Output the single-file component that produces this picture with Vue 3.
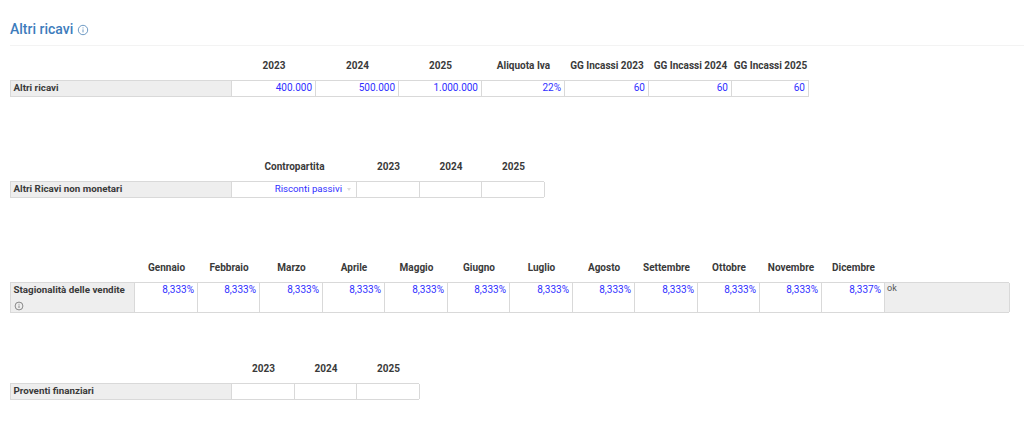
<script setup>
const months = ['Gennaio','Febbraio','Marzo','Aprile','Maggio','Giugno','Luglio','Agosto','Settembre','Ottobre','Novembre','Dicembre']
const monthValues = ['8,333%','8,333%','8,333%','8,333%','8,333%','8,333%','8,333%','8,333%','8,333%','8,333%','8,333%','8,337%']
const firstHead = ['2023','2024','2025','Aliquota Iva','GG Incassi 2023','GG Incassi 2024','GG Incassi 2025']
const firstValues = ['400.000','500.000','1.000.000','22%','60','60','60']
const years = ['2023','2024','2025']
</script>

<template>
  <div class="page">
    <header class="title-bar">
      <h1>Altri ricavi</h1>
      <svg class="info big" viewBox="0 0 12 12"><circle cx="6" cy="6" r="4.7"/><path d="M6 5.4v3M6 3.4v1"/></svg>
    </header>

    <section class="block b1">
      <div class="grid head g1">
        <span></span>
        <span v-for="h in firstHead" :key="h">{{ h }}</span>
      </div>
      <div class="grid row g1">
        <div class="label">Altri ricavi</div>
        <div v-for="(v, i) in firstValues" :key="i" class="cell">{{ v }}</div>
      </div>
    </section>

    <section class="block b2">
      <div class="grid head g2">
        <span></span>
        <span>Contropartita</span>
        <span v-for="y in years" :key="y">{{ y }}</span>
      </div>
      <div class="grid row g2">
        <div class="label">Altri Ricavi non monetari</div>
        <div class="cell select">Risconti passivi<i></i></div>
        <div v-for="y in years" :key="y" class="cell"></div>
      </div>
    </section>

    <section class="block b3">
      <div class="grid head g3">
        <span></span>
        <span v-for="m in months" :key="m">{{ m }}</span>
      </div>
      <div class="grid row tall g3">
        <div class="label">
          <div>Stagionalità delle vendite</div>
          <svg class="info small" viewBox="0 0 12 12"><circle cx="6" cy="6" r="4.7"/><path d="M6 5.4v3M6 3.4v1"/></svg>
        </div>
        <div v-for="(v, i) in monthValues" :key="i" class="cell">{{ v }}</div>
        <div class="status">ok</div>
      </div>
    </section>

    <section class="block b4">
      <div class="grid head g4">
        <span></span>
        <span v-for="y in years" :key="y">{{ y }}</span>
      </div>
      <div class="grid row g4">
        <div class="label">Proventi finanziari</div>
        <div v-for="y in years" :key="y" class="cell"></div>
      </div>
    </section>
  </div>
</template>

<style>
html, body { margin: 0; background: #fff; }
</style>

<style scoped>
.page {
  width: 1024px;
  height: 444px;
  box-sizing: border-box;
  padding: 20px 0 0 10px;
  overflow: hidden;
  font-family: Roboto, "Liberation Sans", sans-serif;
  font-size: 10px;
  color: #3a3a3a;
}
.title-bar {
  display: flex;
  align-items: center;
  gap: 4px;
  height: 25px;
  border-bottom: 1px solid #f3f3f3;
}
h1 {
  margin: 0;
  font-size: 14px;
  font-weight: 500;
  color: #3d7cbc;
  line-height: 18px;
  position: relative;
  top: -4px;
}
.info { fill: none; stroke-width: 0.9; }
.info.big { width: 12px; height: 12px; stroke: #5f8fbd; position: relative; top: -3px; }
.info.small { width: 10px; height: 10px; stroke: #666; display: block; margin-top: 5px; }
.block { display: block; }
.b1 { margin-top: 8px; }
.b2 { margin-top: 58px; }
.b3 { margin-top: 58px; }
.b4 { margin-top: 44px; }
.grid { display: grid; }
.g1 { grid-template-columns: 221px 84px 83px 83px 83px 84px 83px 77px; width: 799px; }
.g2 { grid-template-columns: 221px 125px 63px 62px 63px; width: 534px; }
.g3 { grid-template-columns: 124px 63px 62px 63px 62px 63px 62px 63px 62px 63px 62px 62px 63px 125px; width: 999px; }
.g4 { grid-template-columns: 221px 63px 62px 63px; width: 409px; }
.head {
  height: 26px;
  box-sizing: border-box;
  padding: 0 0 4px 1px;
  align-items: center;
  font-weight: 700;
  text-align: center;
  white-space: nowrap;
}
.row {
  height: 17px;
  box-sizing: border-box;
  border-top: 1px solid #d9d9d9;
  border-bottom: 1px solid #d9d9d9;
  border-left: 1px solid #d9d9d9;
}
.row.tall { height: 31px; }
.label {
  background: #eeeeee;
  font-weight: 700;
  font-size: 9.8px;
  padding: 0 3px 0 2.5px;
  line-height: 13px;
  border-right: 1px solid #d9d9d9;
  white-space: nowrap;
}
.cell {
  color: #3030ff;
  text-align: right;
  padding: 0 3px 0 0;
  line-height: 13px;
  border-right: 1px solid #d9d9d9;
  box-sizing: border-box;
  min-width: 0;
}
.select {
  position: relative;
  font-size: 9.7px;
  padding: 0 14px 0 0;
}
.select i {
  position: absolute;
  right: 5px;
  top: 6px;
  border-left: 2px solid transparent;
  border-right: 2px solid transparent;
  border-top: 3px solid #ddd;
}
.status {
  background: #eeeeee;
  color: #555;
  font-size: 9px;
  line-height: 11px;
  padding-left: 2px;
  border-right: 1px solid #d9d9d9;
}
</style>
